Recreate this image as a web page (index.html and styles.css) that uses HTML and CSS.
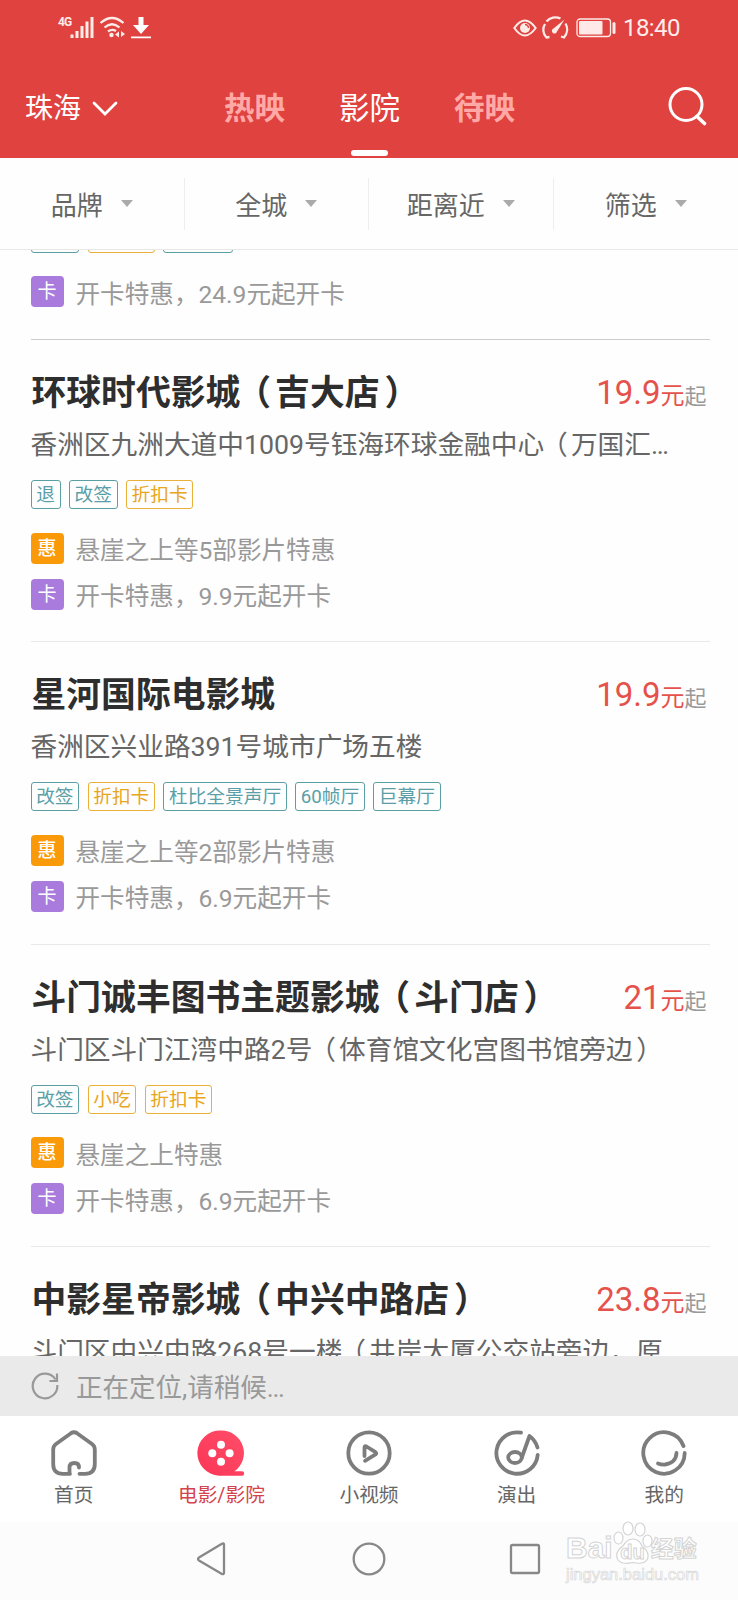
FILE: index.html
```html
<!DOCTYPE html>
<html lang="zh-CN">
<head>
<meta charset="utf-8">
<title>影院</title>
<link rel="stylesheet" href="styles.css">
</head>
<body>
<div class="screen">
  <header class="header">
    <div class="status">
      <div class="status-left">
        <span class="net">4G</span>
        <svg class="signal" width="24" height="24" viewBox="0 0 24 24"><path d="M2 18.500v3.500M7 15v7M12 10v12M17 5.500v16.500M22 1v21" stroke="#fdebe8" stroke-width="3" fill="none"/></svg>
        <svg class="wifi" width="27" height="22" viewBox="0 0 27 22"><path d="M1.500 7Q13 -3 24.500 7M5.500 11.500Q13 5 20.500 11.500M9 15.500Q13 12.500 17 15" stroke="#fdebe8" stroke-width="2.300" fill="none"/><circle cx="12.500" cy="19" r="2.200" fill="#fdebe8"/><path d="M20 15.500v6l-4-3zM22 15v6l4-3z" fill="#fdebe8"/></svg>
        <svg class="download" width="22" height="23" viewBox="0 0 22 23"><path d="M8.500 1h5v8h5.500l-8 9-8-9h5.500zM1 20.500h20v1.800h-20z" fill="#fff"/></svg>
      </div>
      <div class="status-right">
        <svg width="24" height="18" viewBox="0 0 24 18"><path d="M1.300 9Q11.800-6 22.700 9Q11.800 24 1.300 9z" fill="none" stroke="#fdebe8" stroke-width="2"/><circle cx="12" cy="9" r="5" fill="#fdebe8"/><path d="M12 5.500a3.500 3.500 0 0 1 3.500 3.500" fill="none" stroke="#df423f" stroke-width="1.400"/></svg>
        <svg class="gauge" width="27" height="24" viewBox="0 0 27 24"><path d="M7.500 21L4.500 21.500A11 11 0 0 1 3 8M4.500 5.500A11.500 11.500 0 0 1 18.500 2.500M23.500 7.500A12 12 0 0 1 22 21.500L19 20.500" fill="none" stroke="#fdebe8" stroke-width="2.300"/><path d="M22.500 3.500L15 15.500a2.600 2.600 0 1 1-3.500-3z" fill="#fdebe8"/></svg>
        <svg class="battery" width="40" height="20" viewBox="0 0 40 20"><rect x="1" y="1" width="33.500" height="17.500" rx="3" fill="none" stroke="#fdebe8" stroke-width="1.300"/><rect x="3" y="3" width="23.500" height="13.500" rx="1" fill="#ffe9e8"/><rect x="36.500" y="4" width="3" height="12" rx="1.500" fill="#fdebe8"/></svg>
        <span class="clock">18:40</span>
      </div>
    </div>
    <div class="topbar">
      <div class="city">珠海<svg width="26" height="16" viewBox="0 0 26 16"><path d="M2 2l11 11L24 2" fill="none" stroke="#fff" stroke-width="2.800" stroke-linecap="round"/></svg></div>
      <nav class="tabs"><span class="tab">热映</span><span class="tab active">影院</span><span class="tab">待映</span></nav>
      <svg class="search" width="40" height="40" viewBox="0 0 40 40"><circle cx="18" cy="17.500" r="16" fill="none" stroke="#fff" stroke-width="3"/><path d="M29 29.500l7.500 7" stroke="#fff" stroke-width="3.600" stroke-linecap="round"/></svg>
    </div>
  </header>

  <div class="filters">
    <div class="filter">品牌<i class="caret"></i></div>
    <div class="filter">全城<i class="caret"></i></div>
    <div class="filter">距离近<i class="caret"></i></div>
    <div class="filter">筛选<i class="caret"></i></div>
  </div>

  <main class="list">
    <section class="cinema partial">
      <div class="tags"><span class="tag">改签</span><span class="tag gold">折扣卡</span><span class="tag">60帧厅</span></div>
      <div class="promo"><b class="badge purple">卡</b>开卡特惠，24.9元起开卡</div>
    </section>
    <section class="cinema first">
      <div class="head"><h2>环球时代影城<span class="po">（</span>吉大店<span class="pc">）</span></h2><div class="price">19.9<small>元</small><em>起</em></div></div>
      <p class="addr">香洲区九洲大道中1009号钰海环球金融中心<span class="po">（</span>万国汇…</p>
      <div class="tags"><span class="tag">退</span><span class="tag">改签</span><span class="tag gold">折扣卡</span></div>
      <div class="promo"><b class="badge orange">惠</b>悬崖之上等5部影片特惠</div>
      <div class="promo"><b class="badge purple">卡</b>开卡特惠，9.9元起开卡</div>
    </section>
    <section class="cinema">
      <div class="head"><h2>星河国际电影城</h2><div class="price">19.9<small>元</small><em>起</em></div></div>
      <p class="addr">香洲区兴业路391号城市广场五楼</p>
      <div class="tags"><span class="tag">改签</span><span class="tag gold">折扣卡</span><span class="tag">杜比全景声厅</span><span class="tag">60帧厅</span><span class="tag">巨幕厅</span></div>
      <div class="promo"><b class="badge orange">惠</b>悬崖之上等2部影片特惠</div>
      <div class="promo"><b class="badge purple">卡</b>开卡特惠，6.9元起开卡</div>
    </section>
    <section class="cinema">
      <div class="head"><h2>斗门诚丰图书主题影城<span class="po">（</span>斗门店<span class="pc">）</span></h2><div class="price">21<small>元</small><em>起</em></div></div>
      <p class="addr">斗门区斗门江湾中路2号<span class="po">（</span>体育馆文化宫图书馆旁边<span class="pc">）</span></p>
      <div class="tags"><span class="tag">改签</span><span class="tag gold">小吃</span><span class="tag gold">折扣卡</span></div>
      <div class="promo"><b class="badge orange">惠</b>悬崖之上特惠</div>
      <div class="promo"><b class="badge purple">卡</b>开卡特惠，6.9元起开卡</div>
    </section>
    <section class="cinema">
      <div class="head"><h2>中影星帝影城<span class="po">（</span>中兴中路店<span class="pc">）</span></h2><div class="price">23.8<small>元</small><em>起</em></div></div>
      <p class="addr">斗门区中兴中路268号一楼<span class="po">（</span>井岸大厦公交站旁边，原…</p>
    </section>
  </main>

  <div class="locating">
    <svg width="28" height="28" viewBox="0 0 28 28"><path d="M24.500 7.500A12.300 12.300 0 1 0 26.300 13" fill="none" stroke="#999" stroke-width="2.200"/><path d="M26 1.500v7.500h-7.500" fill="none" stroke="#999" stroke-width="2.200"/></svg>
    <span>正在定位,请稍候<span class="dots">...</span></span>
  </div>

  <nav class="bottom">
    <div class="item"><svg width="48" height="48" viewBox="0 0 48 48"><path d="M20 44.800H13Q3.200 44.800 3.200 35V20.500Q3.200 17 6 15L21 4.200Q24 2.200 27 4.200L42 15Q44.800 17 44.800 20.500V35Q44.800 44.800 35 44.800H29.500M19.500 44V38.500Q19.500 34 24.500 34Q29 34 29 38.500" class="line"/></svg><span>首页</span></div>
    <div class="item on"><svg width="48" height="48" viewBox="0 0 48 48"><defs><linearGradient id="reel" x1="0" y1="1" x2="1" y2="0"><stop offset="0" stop-color="#fb3557"/><stop offset="1" stop-color="#ff4e68"/></linearGradient></defs><path d="M24 1.500A22.500 22.500 0 0 1 37.500 42.300H45a2.200 2.200 0 0 1 0 4.400H22A22.600 22.600 0 0 1 24 1.500z" fill="url(#reel)"/><g fill="#fff"><circle cx="24" cy="15.700" r="4"/><circle cx="15.300" cy="24.300" r="4"/><circle cx="32.600" cy="24.300" r="4"/><circle cx="24" cy="32.800" r="4"/></g></svg><span>电影/影院</span></div>
    <div class="item"><svg width="48" height="48" viewBox="0 0 48 48"><circle cx="24" cy="24" r="20.700" class="line"/><path d="M19.500 27V18.500Q19.500 16.500 21.500 17.500L30.500 23.200Q32 24.300 30.500 25.400L20 31.800" class="line"/></svg><span>小视频</span></div>
    <div class="item"><svg width="48" height="48" viewBox="0 0 48 48"><path d="M28 3.700A20.700 20.700 0 1 0 44.700 26" class="line"/><ellipse cx="22" cy="28.500" rx="6.800" ry="5.500" class="line"/><path d="M28.800 28.500L36.500 7Q42.500 11.500 44.500 18.500" class="line"/></svg><span>演出</span></div>
    <div class="item"><svg width="48" height="48" viewBox="0 0 48 48"><path d="M43.500 17A20.700 20.700 0 1 0 44.700 24" class="line"/><path d="M36.500 24Q36 34 25 35.500Q21.500 35.800 18 34.500" class="line"/></svg><span>我的</span></div>
  </nav>

  <div class="sysnav">
    <svg class="back" width="32" height="36" viewBox="0 0 32 36"><path d="M28 3.500V31.500Q28 34 25.500 32.700L3 19.500Q1 18 3 16.500L25.500 3Q28 1.500 28 3.500z" class="sys"/></svg>
    <svg class="home" width="36" height="36" viewBox="0 0 36 36"><circle cx="18" cy="18" r="15.300" class="sys"/></svg>
    <svg class="recent" width="32" height="32" viewBox="0 0 32 32"><rect x="2" y="2" width="28" height="28" rx="1.500" class="sys"/></svg>
    <div class="mark">
      <div class="mark-row"><span>Bai</span>
        <svg width="40" height="44" viewBox="0 0 40 44"><g fill="#fff" stroke="#d4d4d4" stroke-width="1.200"><ellipse cx="5.500" cy="17" rx="4.500" ry="6"/><ellipse cx="15" cy="7.500" rx="5" ry="6.500"/><ellipse cx="27" cy="8.500" rx="5" ry="6.500"/><ellipse cx="34.500" cy="20" rx="4.500" ry="6"/><path d="M20 18Q26 18 29 25Q37 31 34.500 38Q31 44 20 41.500Q9 44 5 39Q1 31 10 25Q14 18 20 18z"/></g><text x="19.500" y="38" text-anchor="middle" class="du">du</text></svg>
        <span class="jy">经验</span></div>
      <div class="mark-url">jingyan.baidu.com</div>
    </div>
  </div>
</div>
</body>
</html>
```
FILE: styles.css
```css
* { box-sizing: border-box; }
body { margin: 0; background: #fefefe; font-family: Roboto, "Noto Sans CJK SC", sans-serif; color: #666; }
.screen { width: 738px; height: 1600px; display: flex; flex-direction: column; overflow: hidden; }
svg { display: block; flex: none; }

.header { height: 158px; flex: none; background: #df423f; color: #fff; }
.status { height: 56px; display: flex; justify-content: space-between; padding: 0 58px 0 58px; }
.status-left { display: flex; align-items: flex-start; padding-top: 16px; }
.net { font-size: 12px; line-height: 13px; font-weight: 700; width: 12px; letter-spacing: -1px; color: #fdebe8; }
.signal { width: 24px; }
.wifi { margin-left: 5px; }
.download { margin-left: 4px; }
.status-right { display: flex; align-items: center; }
.gauge { margin-left: 5px; }
.battery { margin-left: 7px; }
.clock { margin-left: 7px; font-size: 24px; width: 57px; letter-spacing: -.6px; color: #ffeceb; }
.topbar { height: 102px; display: flex; align-items: flex-start; padding-left: 25px; }
.city { display: flex; align-items: center; gap: 11px; width: 199px; font-size: 28px; line-height: 40px; padding-top: 33px; }
.tabs { display: flex; gap: 54px; font-size: 30.500px; line-height: 40px; }
.tab { width: 61px; height: 102px; padding-top: 33px; color: #ffa9a7; font-weight: 700; white-space: nowrap; }
.active { color: #fff; font-weight: 400; display: flex; flex-direction: column; justify-content: space-between; align-items: center; }
.active::after { content: ""; width: 37px; height: 6px; border-radius: 3px; background: #fff; margin-bottom: 2px; }
.search { margin: 31px 0 0 153px; }

.filters { height: 92px; flex: none; display: grid; grid-template-columns: repeat(4, 1fr); align-items: center; border-bottom: 1px solid #e8e8e8; }
.filter { height: 52px; display: flex; align-items: center; justify-content: center; gap: 18px; font-size: 26px; border-right: 1px solid #eee; }
.filter:last-child { border: 0; }
.caret { border: 6.500px solid transparent; border-top: 7px solid #aaa; border-bottom: 0; }

.list { height: 1106px; flex: none; overflow: hidden; padding: 0 28px 0 30.500px; }
.cinema { height: 302.300px; border-top: 1px solid #e8e8e8; padding-top: 32px; }
.partial { display: flow-root; height: 89px; border: 0; padding: 0; }
.partial .tags { margin-top: -26.500px; }
.first { border-color: #ccc; }
.head { display: flex; justify-content: space-between; height: 54px; padding: 0 3.500px 0 1px; }
h2 { margin: 0; font-size: 34.800px; line-height: 42px; font-weight: 700; color: #2e2e2e; white-space: nowrap; }
.po { margin: 0 .12em 0 -.12em; }
.pc { margin: 0 -.14em 0 .14em; }
.price { color: #e5524b; font-size: 33px; line-height: 42px; white-space: nowrap; }
.price small { font-size: 24px; }
.price em { font-size: 22px; font-style: normal; color: #999; }
.addr { margin: 0; height: 54px; font-size: 26.700px; line-height: 38px; white-space: nowrap; }
.tags { display: flex; gap: 8.300px; height: 29px; margin-bottom: 23.500px; }
.tag { border: 1.500px solid #5a9fa3; border-radius: 3px; color: #5a9fa8; font-size: 18.700px; line-height: 28px; padding: 0 4.700px; white-space: nowrap; }
.gold { border-color: #e9b03a; color: #e8a520; }
.promo { display: flex; align-items: center; gap: 12px; height: 31px; margin-bottom: 15px; font-size: 24.600px; color: #999; white-space: nowrap; }
.badge { width: 33px; height: 31px; border-radius: 4px; color: #fff; font-size: 19px; line-height: 32px; font-weight: 400; text-align: center; }
.orange { background: #fb9a08; font-weight: 500; }
.purple { background: #a97bdc; }

.locating { height: 60px; flex: none; display: flex; align-items: center; gap: 17px; padding-left: 31px; background: #eaeaea; color: #999; font-size: 26.500px; line-height: 60px; }
.locating > span { padding-top: 3px; }
.dots { letter-spacing: -1.300px; }
.bottom { height: 106px; flex: none; display: grid; grid-template-columns: repeat(5, 1fr); background: #fff; }
.item { display: flex; flex-direction: column; align-items: center; padding-top: 13px; font-size: 19.700px; line-height: 38px; color: #666; }
.on { color: #d5434c; }
.line { fill: none; stroke: #7d7d7d; stroke-width: 3.800px; stroke-linecap: round; stroke-linejoin: round; }
.sysnav { height: 78px; flex: none; display: flex; align-items: center; padding: 0 0 4px 196px; background: #fcfcfc; position: relative; }
.sys { fill: none; stroke: #888; stroke-width: 2.300px; }
.home { margin-left: 123px; }
.recent { margin-left: 122px; }
.mark { position: absolute; left: 566px; top: -2px; color: #fff; }
.mark-row { display: flex; align-items: flex-end; height: 45px; font: 700 30px/34px "Liberation Sans", "Noto Sans CJK SC", sans-serif; -webkit-text-stroke: 1px #d4d4d4; }
.jy { margin-left: -2px; font-size: 23px; line-height: 32px; }
.du { font: 700 20px "Liberation Sans", sans-serif; fill: #fff; stroke: #d4d4d4; stroke-width: 1px; -webkit-text-stroke: 0; }
.mark-url { font: 16.500px/18px "Liberation Sans", sans-serif; -webkit-text-stroke: .7px #d8d8d8; color: #fff; }
```
